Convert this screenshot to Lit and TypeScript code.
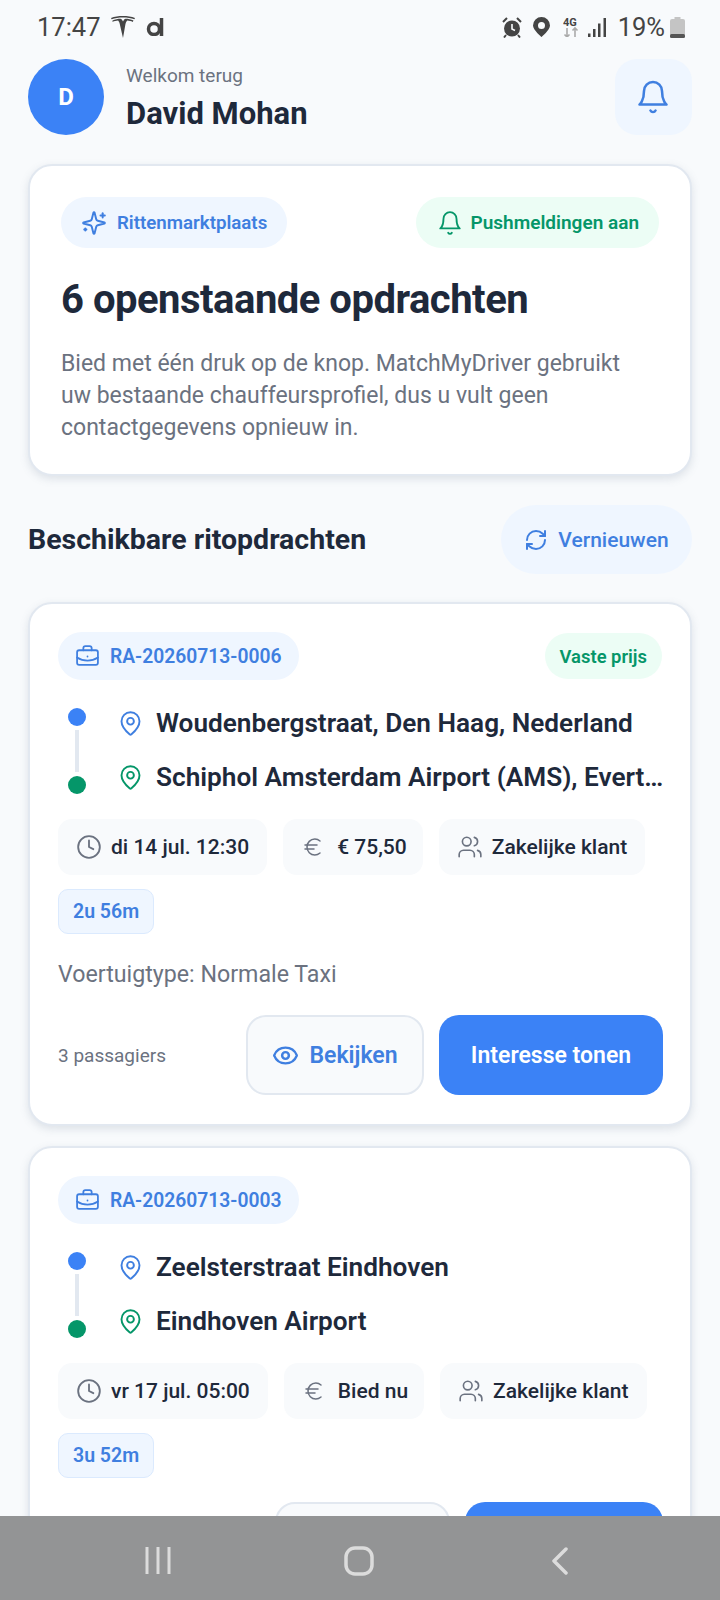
import { LitElement, html, css, svg, nothing } from 'lit';
import { customElement } from 'lit/decorators.js';

const icon = (size: number, color: string, body: unknown, sw = 2) => html`
  <svg class="ic" width=${size} height=${size} viewBox="0 0 24 24" fill="none" stroke=${color}
    stroke-width=${sw} stroke-linecap="round" stroke-linejoin="round">${body}</svg>`;

const bell = svg`<path d="M6 8a6 6 0 0 1 12 0c0 7 3 9 3 9H3s3-2 3-9"/><path d="M10.3 21a1.94 1.94 0 0 0 3.4 0"/>`;
const sparkles = svg`<path d="M9.94 15.5A2 2 0 0 0 8.5 14.06l-6.14-1.58a.5.5 0 0 1 0-.96L8.5 9.94A2 2 0 0 0 9.94 8.5l1.58-6.14a.5.5 0 0 1 .96 0L14.06 8.5A2 2 0 0 0 15.5 9.94l6.14 1.58a.5.5 0 0 1 0 .96L15.5 14.06a2 2 0 0 0-1.44 1.44l-1.58 6.14a.5.5 0 0 1-.96 0z"/><path d="M20 3v4"/><path d="M22 5h-4"/><path d="M4 17v2"/><path d="M5 18H3"/>`;
const refresh = svg`<path d="M3 12a9 9 0 0 1 9-9 9.75 9.75 0 0 1 6.74 2.74L21 8"/><path d="M21 3v5h-5"/><path d="M21 12a9 9 0 0 1-9 9 9.75 9.75 0 0 1-6.74-2.74L3 16"/><path d="M8 16H3v5"/>`;
const briefcase = svg`<path d="M12 12h.01"/><path d="M16 6V4a2 2 0 0 0-2-2h-4a2 2 0 0 0-2 2v2"/><path d="M22 13a18.15 18.15 0 0 1-20 0"/><rect width="20" height="14" x="2" y="6" rx="2"/>`;
const pin = svg`<path d="M20 10c0 5-5.5 10.2-7.4 11.8a1 1 0 0 1-1.2 0C9.5 20.2 4 15 4 10a8 8 0 0 1 16 0"/><circle cx="12" cy="10" r="3"/>`;
const clock = svg`<circle cx="12" cy="12" r="10"/><polyline points="12 6 12 12 16 14"/>`;
const euro = svg`<path d="M4 10h12"/><path d="M4 14h9"/><path d="M19 6a7.7 7.7 0 0 0-5.2-2A7.9 7.9 0 0 0 6 12c0 4.4 3.5 8 7.8 8 2 0 3.8-.8 5.2-2"/>`;
const users = svg`<path d="M16 21v-2a4 4 0 0 0-4-4H6a4 4 0 0 0-4 4v2"/><circle cx="9" cy="7" r="4"/><path d="M22 21v-2a4 4 0 0 0-3-3.87"/><path d="M16 3.13a4 4 0 0 1 0 7.75"/>`;
const eye = svg`<path d="M2.06 12.35a1 1 0 0 1 0-.7 10.75 10.75 0 0 1 19.88 0 1 1 0 0 1 0 .7 10.75 10.75 0 0 1-19.88 0"/><circle cx="12" cy="12" r="3"/>`;

const BLUE = '#3b82f6';
const BLUE_TEXT = '#3f7fe0';
const GREEN = '#059669';
const GREY = '#6b7280';

interface Ride {
  id: string;
  fixed: boolean;
  from: string;
  to: string;
  when: string;
  price: string;
  client: string;
  duration: string;
  // only the first card is fully on screen, the second runs under the nav bar
  full: boolean;
}

const RIDES: Ride[] = [
  {
    id: 'RA-20260713-0006',
    fixed: true,
    from: 'Woudenbergstraat, Den Haag, Nederland',
    to: 'Schiphol Amsterdam Airport (AMS), Evert van de Beekstraat',
    when: 'di 14 jul. 12:30',
    price: '€ 75,50',
    client: 'Zakelijke klant',
    duration: '2u 56m',
    full: true,
  },
  {
    id: 'RA-20260713-0003',
    fixed: false,
    from: 'Zeelsterstraat Eindhoven',
    to: 'Eindhoven Airport',
    when: 'vr 17 jul. 05:00',
    price: 'Bied nu',
    client: 'Zakelijke klant',
    duration: '3u 52m',
    full: false,
  },
];

@customElement('app-root')
export class AppRoot extends LitElement {
  static styles = css`
    :host {
      display: flex;
      flex-direction: column;
      width: 720px;
      height: 1600px;
      overflow: hidden;
      background: #f8fafc;
      font-family: Roboto, "Liberation Sans", sans-serif;
      color: #1e293b;
    }
    * { box-sizing: border-box; }
    .ic { flex: none; display: block; }

    .status {
      flex: none;
      height: 58px;
      padding: 9px 35px 0 37px;
      display: flex;
      align-items: flex-start;
      justify-content: space-between;
      color: #444;
      font-size: 25.5px;
    }
    .status-side { display: flex; align-items: center; height: 36px; }
    .status-side svg { display: block; flex: none; }
    .m5 { margin-left: 5px; }
    .m9 { margin-left: 9px; }
    .m10 { margin-left: 10px; }
    .m11 { margin-left: 11px; }
    .m12 { margin-left: 12px; }
    .m13 { margin-left: 13px; }

    .content { flex: 1; min-height: 0; overflow: hidden; padding: 0 28px; }

    .head { display: flex; align-items: center; height: 77px; }
    .avatar {
      width: 76px;
      height: 76px;
      border-radius: 50%;
      background: #3b82f6;
      color: #fff;
      font-size: 24px;
      font-weight: 700;
      display: flex;
      align-items: center;
      justify-content: center;
    }
    .who { flex: 1; margin-left: 22px; padding-top: 3px; }
    .welcome { font-size: 19px; color: #6b7280; line-height: 24px; margin-bottom: 8px; }
    .name { font-size: 31px; font-weight: 700; line-height: 36px; }
    .bell-btn {
      width: 77px;
      height: 76px;
      border-radius: 22px;
      background: #eff6ff;
      display: flex;
      align-items: center;
      justify-content: center;
      padding-right: 2px;
    }

    .card {
      background: #fff;
      border: 2px solid #e2e8f0;
      border-radius: 24px;
      box-shadow: 0 3px 8px rgba(100, 116, 139, 0.18);
    }
    .hero { margin-top: 29px; height: 312px; padding: 31px 31px 0; }
    .row-between { display: flex; align-items: center; justify-content: space-between; }
    .pill {
      display: flex;
      align-items: center;
      height: 51px;
      border-radius: 26px;
      font-weight: 600;
    }
    .pill.blue { background: #eff6ff; color: #3f7fe0; padding: 0 20px; gap: 10px; font-size: 18.7px; }
    .pill.green { background: #ecfdf5; color: #059669; padding: 0 20px 0 21px; gap: 8px; font-size: 19px; }
    h1 { margin: 26px 0 0; font-size: 40px; line-height: 52px; font-weight: 700; letter-spacing: -0.5px; }
    .hero p { margin: 22px 0 0; padding-right: 10px; font-size: 23px; line-height: 32px; color: #6b7280; }

    .section { margin-top: 29px; height: 69px; }
    h2 { margin: 0; font-size: 28.5px; font-weight: 700; }
    .refresh {
      width: 191px;
      height: 69px;
      border-radius: 35px;
      background: #eff6ff;
      color: #3f7fe0;
      font-size: 21px;
      font-weight: 500;
      display: flex;
      align-items: center;
      justify-content: center;
      gap: 10px;
    }

    .ride { margin-top: 28px; padding: 28px; height: 524px; }
    .ride + .ride { margin-top: 20px; }
    .ride-id {
      display: flex;
      align-items: center;
      height: 48px;
      width: 241px;
      padding: 0 17px;
      gap: 10px;
      border-radius: 24px;
      background: #eff6ff;
      color: #3f7fe0;
      font-size: 19.3px;
      font-weight: 600;
      white-space: nowrap;
    }
    .fixed {
      height: 46px;
      padding: 0 15px;
      border-radius: 23px;
      background: #ecfdf5;
      color: #059669;
      font-size: 18.4px;
      font-weight: 600;
      display: flex;
      align-items: center;
    }
    .top { height: 48px; }

    .route { display: flex; margin-top: 16px; height: 110px; }
    .rail {
      width: 38px;
      flex: none;
      padding-top: 12px;
      display: flex;
      flex-direction: column;
      align-items: center;
      margin-right: 21px;
    }
    .dot { width: 18px; height: 18px; border-radius: 50%; flex: none; }
    .line { width: 4px; height: 42px; margin: 4px 0; background: #e2e8f0; flex: none; }
    .stops { flex: 1; min-width: 0; margin-right: -6px; }
    .stop { display: flex; align-items: center; height: 54px; gap: 12px; }
    .stop span {
      font-size: 26.2px;
      font-weight: 600;
      white-space: nowrap;
      overflow: hidden;
      text-overflow: ellipsis;
    }

    .chips { display: flex; gap: 16px; margin-top: 13px; }
    .chip {
      display: flex;
      align-items: center;
      height: 56px;
      padding: 0 18px;
      gap: 9px;
      border-radius: 14px;
      background: #f8fafc;
      font-size: 21px;
      font-weight: 500;
      color: #1e293b;
      white-space: nowrap;
    }
    .chip.price { padding-right: 16px; }
    .price-text { margin-left: 3px; }
    .duration {
      display: inline-flex;
      align-items: center;
      height: 45px;
      margin-top: 14px;
      padding: 0 14px;
      border: 1.5px solid #dbeafe;
      border-radius: 10px;
      background: #eff6ff;
      color: #3f7fe0;
      font-size: 19.5px;
      font-weight: 600;
    }
    .vehicle { margin-top: 25px; font-size: 23.2px; line-height: 30px; color: #6b7280; }

    .actions { display: flex; align-items: center; justify-content: flex-end; gap: 15px; margin: 26px -1px 0 0; }
    .actions.tight { margin-top: 24px; }
    .pax { flex: 1; font-size: 19px; color: #6b7280; }
    .view {
      width: 178px;
      height: 80px;
      border: 2px solid #e2e8f0;
      border-radius: 20px;
      background: #f8fafc;
      color: #3f7fe0;
      font-size: 23px;
      font-weight: 600;
      display: flex;
      align-items: center;
      justify-content: center;
      gap: 10px;
    }
    .interest {
      width: 224px;
      height: 80px;
      border-radius: 20px;
      background: #3b82f6;
      color: #fff;
      font-size: 23px;
      font-weight: 600;
      display: flex;
      align-items: center;
      justify-content: center;
    }
    .tight .view { width: 175px; }
    .tight .interest { width: 198px; }

    .nav {
      flex: none;
      height: 84px;
      background: #939495;
      display: flex;
      align-items: center;
      justify-content: space-between;
      padding: 5px 152px 0 145px;
    }
    .nav svg { display: block; }
    .nav .home { margin-right: 6px; }
  `;

  private renderStatus() {
    return html`
      <div class="status">
        <div class="status-side">
          <span>17:47</span>
          <svg class="m10" width="24" height="22" viewBox="0 0 24 22" fill="#444">
            <path d="M0 2C7 -.6 17 -.6 24 2l-.6 1.300C17 1 7 1 .6 3.300z"/>
            <path d="M1.500 4.500C4 3.300 7 2.700 9.500 2.700c.8 0 1.300.8 1.800 1.500l.7 1.300.7-1.300c.5-.7 1-1.500 1.800-1.500 2.500 0 5.500.6 8 1.800l-.8 1.500c-1.500-.8-3.500-1.300-5.500-1.400-1 1-1.700 2.800-2 5L12 22l-2.900-12.400c-.3-2.200-1-4-2-5-2 .1-4 .6-5.500 1.400z"/>
          </svg>
          <svg class="m11" width="18" height="18" viewBox="0 0 18 18" fill="none" stroke="#444" stroke-width="3.5">
            <circle cx="8" cy="11" r="5.500"/><path d="M15.500 0v18"/>
          </svg>
        </div>
        <div class="status-side">
          <svg width="20" height="21" viewBox="0 0 20 21" fill="#444">
            <circle cx="10" cy="11.500" r="8"/>
            <path d="M10 7v5l3 1.500" fill="none" stroke="#f8fafc" stroke-width="1.600"/>
            <path d="M1 5l4-4M19 5l-4-4M4 18l-2 2.500M16 18l2 2.500" stroke="#444" stroke-width="2"/>
          </svg>
          <svg class="m11" width="17" height="20" viewBox="0 0 17 20" fill="#444">
            <path fill-rule="evenodd" d="M8.500 0A8.500 8.500 0 0 0 0 8.500C0 13 8.500 20 8.500 20S17 13 17 8.500A8.500 8.500 0 0 0 8.500 0zm0 5a3.500 3.500 0 1 1 0 7 3.500 3.500 0 0 1 0-7z"/>
          </svg>
          <svg class="m13" width="16" height="20" viewBox="0 0 16 20">
            <text x="0" y="9" font-family="Roboto" font-size="11" font-weight="700" fill="#444">4G</text>
            <path d="M4 11v9M1.500 17.500L4 20l2.500-2.500M12 20v-9M9.500 13.500L12 11l2.500 2.500" fill="none" stroke="#aaa" stroke-width="1.600"/>
          </svg>
          <svg class="m9" width="18" height="19" viewBox="0 0 18 19" fill="#444">
            <rect x="0" y="15.500" width="2.500" height="3.500"/><rect x="5" y="11" width="2.500" height="8"/>
            <rect x="10" y="5.500" width="2.500" height="13.500"/><rect x="15.500" y="0" width="2.500" height="19"/>
          </svg>
          <span class="m12">19%</span>
          <svg class="m5" width="15" height="21" viewBox="0 0 15 21">
            <rect x="4.500" y="0" width="6" height="3" fill="#c4c4c4"/>
            <rect x="0" y="2" width="15" height="19" rx="2" fill="#c4c4c4"/>
            <rect x="0" y="17" width="15" height="4" rx="1.500" fill="#555"/>
          </svg>
        </div>
      </div>`;
  }

  private renderRide(r: Ride) {
    return html`
      <div class="card ride">
        <div class="row-between top">
          <div class="ride-id">${icon(25, BLUE_TEXT, briefcase, 1.7)}${r.id}</div>
          ${r.fixed ? html`<div class="fixed">Vaste prijs</div>` : nothing}
        </div>
        <div class="route">
          <div class="rail">
            <div class="dot" style="background:${BLUE}"></div>
            <div class="line"></div>
            <div class="dot" style="background:${GREEN}"></div>
          </div>
          <div class="stops">
            <div class="stop">${icon(27, BLUE_TEXT, pin, 1.7)}<span>${r.from}</span></div>
            <div class="stop">${icon(27, GREEN, pin, 1.7)}<span>${r.to}</span></div>
          </div>
        </div>
        <div class="chips">
          <div class="chip">${icon(26, GREY, clock, 1.7)}${r.when}</div>
          <div class="chip price">${icon(24, GREY, euro, 1.5)}<span class="price-text">${r.price}</span></div>
          <div class="chip">${icon(26, GREY, users, 1.5)}${r.client}</div>
        </div>
        <div class="duration">${r.duration}</div>
        ${r.full
          ? html`
              <div class="vehicle">Voertuigtype: Normale Taxi</div>
              <div class="actions">
                <div class="pax">3 passagiers</div>
                <div class="view">${icon(27, BLUE_TEXT, eye, 2.2)}Bekijken</div>
                <div class="interest">Interesse tonen</div>
              </div>`
          : html`
              <div class="actions tight">
                <div class="view"></div>
                <div class="interest"></div>
              </div>`}
      </div>`;
  }

  render() {
    return html`
      ${this.renderStatus()}
      <div class="content">
        <div class="head">
          <div class="avatar">D</div>
          <div class="who">
            <div class="welcome">Welkom terug</div>
            <div class="name">David Mohan</div>
          </div>
          <div class="bell-btn">${icon(36, BLUE_TEXT, bell, 1.7)}</div>
        </div>

        <div class="card hero">
          <div class="row-between">
            <div class="pill blue">${icon(26, BLUE_TEXT, sparkles, 1.8)}Rittenmarktplaats</div>
            <div class="pill green">${icon(26, GREEN, bell, 1.7)}Pushmeldingen aan</div>
          </div>
          <h1>6 openstaande opdrachten</h1>
          <p>Bied met één druk op de knop. MatchMyDriver gebruikt uw bestaande chauffeursprofiel, dus u vult geen contactgegevens opnieuw in.</p>
        </div>

        <div class="row-between section">
          <h2>Beschikbare ritopdrachten</h2>
          <div class="refresh">${icon(24, BLUE_TEXT, refresh, 2)}Vernieuwen</div>
        </div>

        ${RIDES.map((r) => this.renderRide(r))}
      </div>
      <div class="nav">
        <svg width="26" height="27" viewBox="0 0 26 27" fill="none" stroke="#dcdcdc" stroke-width="3">
          <path d="M2 0v27M13 0v27M24 0v27"/>
        </svg>
        <svg class="home" width="30" height="30" viewBox="0 0 30 30" fill="none" stroke="#dcdcdc" stroke-width="3.5">
          <rect x="2" y="2" width="26" height="26" rx="9"/>
        </svg>
        <svg width="16" height="28" viewBox="0 0 16 28" fill="none" stroke="#dcdcdc" stroke-width="3.5" stroke-linecap="round" stroke-linejoin="round">
          <path d="M14 2L2 14l12 12"/>
        </svg>
      </div>`;
  }
}
